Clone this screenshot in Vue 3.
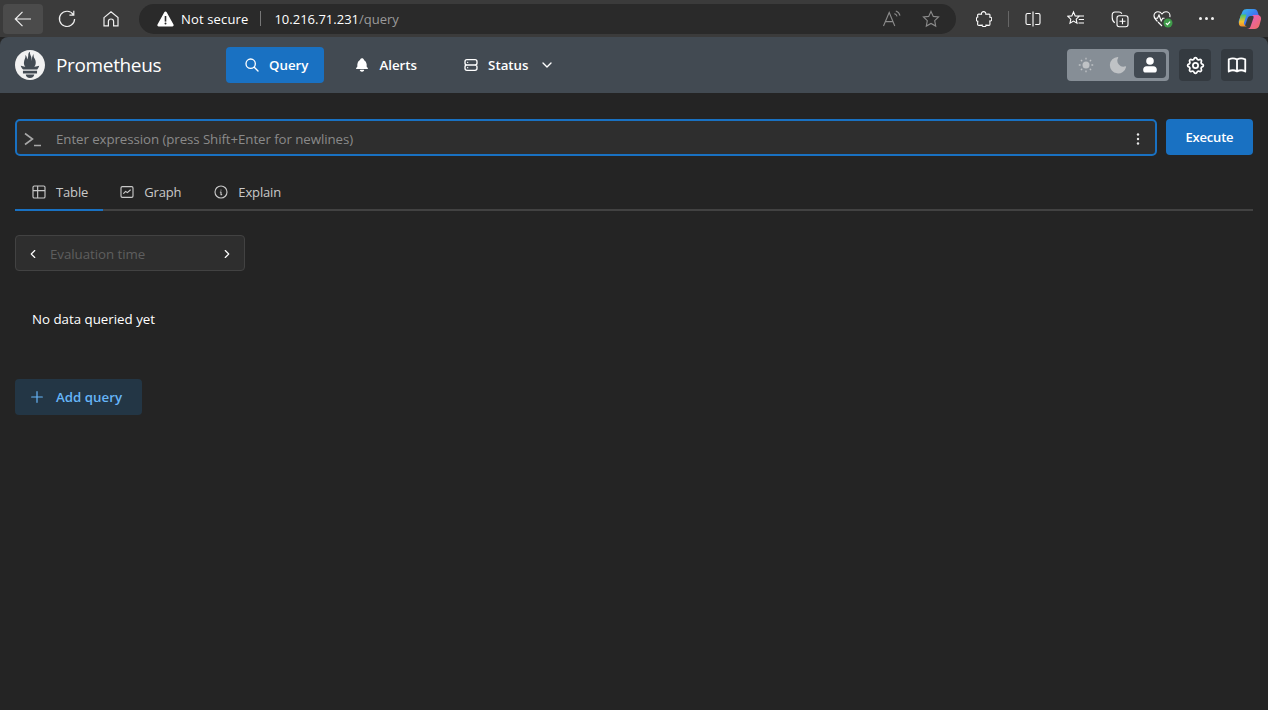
<template>
  <div class="page">
    <!-- browser chrome -->
    <div class="chrome">
      <div class="chrome-left">
        <span class="cbtn back">
          <svg width="20" height="20" viewBox="0 0 20 20" class="thin"><path d="M18 10H2.500M9.500 2.800 2.300 10l7.200 7.200" /></svg>
        </span>
        <span class="cbtn">
          <svg width="20" height="20" viewBox="0 0 20 20" class="thin"><path d="M16.300 5.600A7.600 7.600 0 1 0 17.600 10M16.800 1.800v4.400h-4.400" /></svg>
        </span>
        <span class="cbtn">
          <svg width="18" height="18" viewBox="0 0 18 18" class="thin"><path d="M2 7.600 9 1.800l7 5.800v8.200h-4.400v-4.200a2.600 2.600 0 0 0-5.200 0v4.200H2z" /></svg>
        </span>
      </div>
      <div class="omnibox">
        <svg class="warn" width="17" height="16" viewBox="0 0 17 16"><path d="M8.500.6c.5 0 .9.2 1.200.7l6.800 12.200c.5.9-.1 2-1.200 2H1.700c-1.100 0-1.700-1.100-1.200-2L7.300 1.300c.3-.5.700-.7 1.200-.7z" fill="#fff" /><rect x="7.700" y="5" width="1.600" height="5.600" fill="#2a2a2a" /><circle cx="8.500" cy="12.600" r="1" fill="#2a2a2a" /></svg>
        <span class="secure">Not secure</span>
        <span class="omni-sep"></span>
        <span class="url">10.216.71.231<span class="url-path">/query</span></span>
        <span class="omni-right">
          <svg width="20" height="18" viewBox="0 0 20 18" class="dim"><path d="M1.500 16 7.200 2.500 12.800 16M3.400 11.600h7.600M12.400 3.600c1.400.4 2.300 1.400 2.700 2.800M13.800 1c2.200.6 3.600 2.200 4.200 4.600" /></svg>
          <svg width="18" height="18" viewBox="0 0 18 18" class="dim"><path d="m9 1.400 2.300 5 5.300.6-3.900 3.700 1 5.400L9 13.400l-4.700 2.700 1-5.400L1.400 7l5.300-.6z" /></svg>
        </span>
      </div>
      <div class="chrome-right">
        <svg class="ext" width="16" height="16" viewBox="0 0 16 16"><path d="M5.500 3.200C5.200 1.800 6.200.6 7.600.6S10 1.800 9.800 3.200L13 3c.6 0 1 .4 1 1l-.2 2.200c1.400-.2 2 .8 2 1.900s-.8 2.200-2 1.900L14 13c0 1-.5 1.400-1 1.400l-3-.2c.2.8-.6 1.400-1.800 1.400S6 15 6.200 14.200l-3.200.2c-1 0-1.400-.4-1.400-1.400l.2-2.600c-1 0-1.400-1-1.400-2.200S1 6 1.800 6L1.600 4c0-.6.4-1 1.200-1z" fill="none" stroke="#fff" stroke-width="1.100" /></svg>
        <span class="chrome-sep"></span>
        <svg class="ext" width="16" height="16" viewBox="0 0 16 16"><path d="M5.800 2.500H2.500a1.500 1.500 0 0 0-1.500 1.500v8a1.500 1.500 0 0 0 1.500 1.500h3.300M10.200 2.500h3.300A1.500 1.500 0 0 1 15 4v8a1.500 1.500 0 0 1-1.500 1.500h-3.300M8 .5v15" fill="none" stroke="#fff" stroke-width="1.100" /></svg>
        <svg class="ext" width="18" height="18" viewBox="0 0 18 18"><path d="m6.500 2 1.700 3.900 4 .4-3 2.800.8 4.100-3.500-2.100L3 13.200l.8-4.100-3-2.800 4-.4zM11.500 6h5.500M11.800 9.500H17M11.500 13H17" fill="none" stroke="#fff" stroke-width="1.100" /></svg>
        <svg class="ext" width="18" height="18" viewBox="0 0 18 18"><path d="M3.800 12.800C2.300 12 1.200 9.900 1.200 7.500V5c0-1.800 1-3 2.800-3h4c1.400 0 2.400.7 2.800 1.800" fill="none" stroke="#fff" stroke-width="1.100" /><rect x="6" y="5.800" width="11" height="11" rx="2.200" fill="none" stroke="#fff" stroke-width="1.100" /><path d="M11.500 8.300v6M8.500 11.300h6" stroke="#fff" stroke-width="1.100" /></svg>
        <span class="health">
          <svg width="20" height="18" viewBox="0 0 20 18"><path d="M4.500 11.500C2.300 9.500 1 8 1 5.800 1 3.500 2.800 1.800 5 1.800c1.700 0 3 .8 4 2.200 1-1.400 2.300-2.200 4-2.200 2.200 0 4 1.700 4 4 0 .5-.1.900-.2 1.400M1.200 8.200h3.300L6 5l2.200 6 1.500-2.800h1.800M5 12l4 4" fill="none" stroke="#fff" stroke-width="1.100" /><circle cx="15" cy="13" r="4.500" fill="#3f9c4a" /><path d="m12.900 13.100 1.500 1.500 2.700-2.900" fill="none" stroke="#fff" stroke-width="1.200" /></svg>
        </span>
        <span class="more"><i></i><i></i><i></i></span>
        <svg class="copilot" width="24" height="22" viewBox="0 0 24 22">
          <defs>
            <linearGradient id="cpa" x1="0" y1="0" x2="1" y2="1"><stop offset="0" stop-color="#38c6e8" /><stop offset="0.5" stop-color="#3c7cf0" /><stop offset="1" stop-color="#7a55e0" /></linearGradient>
            <linearGradient id="cpb" x1="0" y1="0" x2="0" y2="1"><stop offset="0" stop-color="#3fc46e" /><stop offset="0.6" stop-color="#f2c230" /><stop offset="1" stop-color="#f08a2c" /></linearGradient>
            <linearGradient id="cpc" x1="0" y1="0" x2="1" y2="1"><stop offset="0" stop-color="#e45bd0" /><stop offset="1" stop-color="#f0705a" /></linearGradient>
          </defs>
          <path d="M9 1h7c2 0 3 1 3.500 2.500L21 8h-8.500C11 8 10 9 9.500 10.500L7 17.500C5 18 3 18.500 1.500 16.500.500 15 .500 13.500 1 12L4.500 3.500C5.300 1.800 7 1 9 1z" fill="url(#cpa)" />
          <path d="M4 6.500h4.500L6 14.500c-.5 2 1 3.500 3 4H4c-2.500 0-3.500-2-3-4.500L2.500 8c.2-1 .7-1.500 1.500-1.500z" fill="url(#cpb)" />
          <path d="M14 7h5c2.800 0 4.500 2 4 4.500L21.500 17c-.6 2.800-2.800 4-5 4H9c2 0 3-1 3.500-2.500l3-8.500c.4-1.300-.2-2.500-1.500-3z" fill="url(#cpc)" />
        </svg>
      </div>
    </div>

    <!-- app header -->
    <header class="header">
      <div class="brand">
        <svg width="30" height="30" viewBox="0 0 24 24"><path fill="#f1f1f1" d="M12 0C5.373 0 0 5.372 0 12c0 6.627 5.373 12 12 12s12-5.373 12-12c0-6.628-5.373-12-12-12zm0 22.460c-1.885 0-3.414-1.260-3.414-2.814h6.828c0 1.553-1.528 2.813-3.414 2.813zm5.640-3.745H6.360v-2.046h11.280v2.046zm-.04-3.098H6.391c-.037-.043-.075-.086-.111-.13-1.155-1.401-1.427-2.133-1.690-2.879-.005-.025 1.400.287 2.395.511 0 0 .513.119 1.262.255-.719-.842-1.146-1.912-1.146-3.005 0-2.401 1.842-4.499 1.177-6.195.647.053 1.339 1.366 1.386 3.420.688-.951.976-2.687.976-3.751 0-1.103.726-2.383 1.453-2.427-.648 1.067.168 1.982.894 4.256.272.854.237 2.290.447 3.201.07-1.892.395-4.652 1.595-5.605-.529 1.200.078 2.702.494 3.424.671 1.164 1.078 2.047 1.078 3.716a4.642 4.642 0 01-1.110 2.996c.792-.149 1.338-.283 1.338-.283l2.573-.502s-.374 1.538-1.813 3.098z" /></svg>
        <span class="brand-name">Prometheus</span>
      </div>
      <nav class="nav">
        <a class="nav-item active">
          <svg class="ti" width="16" height="16" viewBox="0 0 24 24"><path d="M3 10a7 7 0 1 0 14 0a7 7 0 1 0-14 0M21 21l-6-6" /></svg>
          Query
        </a>
        <a class="nav-item">
          <svg width="16" height="16" viewBox="0 0 24 24" fill="#fff"><path d="M14.235 19c.865 0 1.322 1.024.745 1.668a3.992 3.992 0 0 1-2.980 1.332a3.992 3.992 0 0 1-2.980-1.332c-.552-.616-.158-1.579.634-1.661l.11-.006h4.471z" /><path d="M12 2c1.358 0 2.506.903 2.875 2.141l.046.171l.008.043a8.013 8.013 0 0 1 4.024 6.069l.028.287l.019.289v2.931l.021.136a3 3 0 0 0 1.143 1.847l.167.117l.162.099c.86.487.56 1.766-.377 1.864l-.116.006h-16c-1.028 0-1.387-1.364-.493-1.870a3 3 0 0 0 1.472-2.063l.021-.143l.001-2.970a8 8 0 0 1 3.821-6.454l.248-.146l.01-.043a3.003 3.003 0 0 1 2.562-2.290l.182-.017l.176-.004z" /></svg>
          Alerts
        </a>
        <a class="nav-item">
          <svg class="ti" width="16" height="16" viewBox="0 0 24 24"><path d="M3 7a3 3 0 0 1 3-3h12a3 3 0 0 1 3 3v2a3 3 0 0 1-3 3h-12a3 3 0 0 1-3-3zM3 15a3 3 0 0 1 3-3h12a3 3 0 0 1 3 3v2a3 3 0 0 1-3 3h-12a3 3 0 0 1-3-3zM7 8v.01M7 16v.01" /></svg>
          Status
          <svg class="ti caret" width="16" height="16" viewBox="0 0 24 24"><path d="m6 9 6 6 6-6" /></svg>
        </a>
      </nav>
      <div class="header-right">
        <div class="theme">
          <span class="theme-opt">
            <svg width="16" height="16" viewBox="0 0 16 16" fill="#bfc2c5"><circle cx="8" cy="8" r="3.500" /><path d="M8 .8v1.800M8 13.400v1.800M.8 8h1.800M13.400 8h1.800M2.900 2.900l1.300 1.300M11.800 11.800l1.300 1.300M2.900 13.100l1.300-1.300M11.800 4.200l1.300-1.300" stroke="#bfc2c5" stroke-width="1.300" /></svg>
          </span>
          <span class="theme-opt">
            <svg width="18" height="18" viewBox="0 0 18 18" fill="#bfc2c5"><path d="M8.800 1c.4 0 .6.400.4.700a6 6 0 0 0 7.300 8.600c.4-.1.700.200.6.600A8.200 8.200 0 1 1 8.800 1z" /></svg>
          </span>
          <span class="theme-opt on">
            <svg width="18" height="18" viewBox="0 0 18 18" fill="#fff"><circle cx="9" cy="5" r="3.800" /><path d="M5.500 10.300h7c2 0 3.300 1.400 3.300 3.300v.600c0 1.500-1 2.300-2.300 2.300h-9C3.200 16.500 2.200 15.700 2.200 14.200v-.600c0-1.900 1.300-3.300 3.300-3.300z" /></svg>
          </span>
        </div>
        <span class="square">
          <svg class="ti" width="21" height="21" viewBox="0 0 24 24"><path d="M10.325 4.317c.426-1.756 2.924-1.756 3.350 0a1.724 1.724 0 0 0 2.573 1.066c1.543-.94 3.310.826 2.370 2.370a1.724 1.724 0 0 0 1.065 2.572c1.756.426 1.756 2.924 0 3.350a1.724 1.724 0 0 0-1.066 2.573c.94 1.543-.826 3.310-2.370 2.370a1.724 1.724 0 0 0-2.572 1.065c-.426 1.756-2.924 1.756-3.350 0a1.724 1.724 0 0 0-2.573-1.066c-1.543.94-3.310-.826-2.370-2.370a1.724 1.724 0 0 0-1.065-2.572c-1.756-.426-1.756-2.924 0-3.350a1.724 1.724 0 0 0 1.066-2.573c-.94-1.543.826-3.310 2.370-2.370c1 .608 2.296.07 2.572-1.065zM9 12a3 3 0 1 0 6 0a3 3 0 0 0-6 0" /></svg>
        </span>
        <span class="square">
          <svg class="ti" width="22" height="22" viewBox="0 0 24 24"><path d="M3 19a9 9 0 0 1 9 0a9 9 0 0 1 9 0M3 6a9 9 0 0 1 9 0a9 9 0 0 1 9 0M3 6v13M12 6v13M21 6v13" /></svg>
        </span>
      </div>
    </header>

    <main class="main">
      <div class="query-row">
        <div class="expr">
          <svg class="term" width="20" height="20" viewBox="0 0 20 20"><path d="m2 4.500 7.500 5.500L2 15.500M11 16.500h7" /></svg>
          <span class="placeholder">Enter expression (press Shift+Enter for newlines)</span>
          <svg class="dots" width="16" height="16" viewBox="0 0 16 16" fill="#e8e8e8"><circle cx="8" cy="3.500" r="1.200" /><circle cx="8" cy="8" r="1.200" /><circle cx="8" cy="12.500" r="1.200" /></svg>
        </div>
        <button class="execute">Execute</button>
      </div>

      <div class="tabs">
        <a class="tab active">
          <svg class="ti small" width="16" height="16" viewBox="0 0 24 24"><path d="M3 5a2 2 0 0 1 2-2h14a2 2 0 0 1 2 2v14a2 2 0 0 1-2 2h-14a2 2 0 0 1-2-2zM3 10h18M10 3v18" /></svg>
          Table
        </a>
        <a class="tab">
          <svg class="ti small" width="16" height="16" viewBox="0 0 24 24"><path d="M3 6a2 2 0 0 1 2-2h14a2 2 0 0 1 2 2v12a2 2 0 0 1-2 2h-14a2 2 0 0 1-2-2zM7 14l3-3 2.500 2 4.500-4" /></svg>
          Graph
        </a>
        <a class="tab last">
          <svg class="ti small" width="16" height="16" viewBox="0 0 24 24"><path d="M3 12a9 9 0 1 0 18 0a9 9 0 0 0-18 0M12 9h.01M11 12h1v4h1" /></svg>
          Explain
        </a>
      </div>

      <div class="eval">
        <svg class="ti" width="14" height="14" viewBox="0 0 24 24"><path d="m15 6-6 6 6 6" /></svg>
        <span class="eval-label">Evaluation time</span>
        <svg class="ti" width="14" height="14" viewBox="0 0 24 24"><path d="m9 6 6 6-6 6" /></svg>
      </div>

      <p class="empty">No data queried yet</p>

      <button class="add">
        <svg class="plus" width="16" height="16" viewBox="0 0 24 24"><path d="M12 4v16M4 12h16" /></svg>
        Add query
      </button>
    </main>
  </div>
</template>

<script setup>
</script>

<style>
html, body {
  margin: 0;
  background: #242424;
}
</style>

<style scoped>
.page {
  height: 710px;
  overflow: hidden;
  background: #242424;
  color: #fff;
  font-family: "Open Sans", "Noto Sans", sans-serif;
  font-size: 13px;
}

.chrome {
  height: 37px;
  background: #3b3b3b;
  display: flex;
  align-items: center;
}

.chrome-left {
  display: flex;
  align-items: center;
  padding-left: 3px;
  width: 139px;
  flex: none;
  box-sizing: border-box;
  gap: 4px;
}

.cbtn {
  width: 40px;
  height: 30px;
  border-radius: 4px;
  display: flex;
  align-items: center;
  justify-content: center;
}

.cbtn.back {
  background: #4b4b4b;
}

.thin {
  fill: none;
  stroke: #efefef;
  stroke-width: 1.2;
}

.omnibox {
  width: 817px;
  height: 30px;
  flex: none;
  border-radius: 15px;
  background: #2a2a2a;
  display: flex;
  align-items: center;
  padding: 0 16px 0 18px;
  box-sizing: border-box;
}

.secure {
  margin-left: 7px;
  font-size: 13px;
  letter-spacing: 0.15px;
}

.omni-sep {
  width: 1px;
  height: 15px;
  background: #777;
  margin: 0 13px 0 12px;
}

.url {
  font-size: 13px;
}

.url-path {
  color: #9a9a9a;
}

.omni-right {
  margin-left: auto;
  display: flex;
  align-items: center;
  gap: 20px;
}

.dim {
  fill: none;
  stroke: #8b8b8b;
  stroke-width: 1.1;
}

.chrome-right {
  flex: 1;
  display: flex;
  align-items: center;
  padding-left: 20px;
  position: relative;
}

.chrome-sep {
  width: 1px;
  height: 16px;
  background: #666;
  margin: 0 16px 0 16px;
}

.chrome-right .ext + .ext {
  margin-left: 26px;
}

.chrome-sep + .ext {
  margin-left: 0 !important;
}

.health {
  display: flex;
  margin-left: 24px;
}

.more {
  display: flex;
  gap: 3px;
  margin-left: 26px;
}

.more i {
  width: 3px;
  height: 3px;
  border-radius: 50%;
  background: #f2f2f2;
}

.copilot {
  margin-left: 24px;
}

.header {
  height: 56px;
  background: #424a52;
  border-radius: 8px 8px 0 0;
  display: flex;
  align-items: center;
  padding: 0 15px;
}

.brand {
  display: flex;
  align-items: center;
  gap: 11px;
  width: 211px;
  flex: none;
}

.brand svg {
  flex: none;
}

.brand-name {
  font-size: 19px;
  letter-spacing: -0.35px;
}

.nav {
  display: flex;
  align-items: center;
  gap: 11px;
}

.nav-item {
  height: 36px;
  padding: 0 16px 0 19px;
  border-radius: 4px;
  display: flex;
  align-items: center;
  gap: 9px;
  font-size: 13.3px;
  font-weight: 600;
  color: #fff;
}

.nav-item.active {
  background: #1971c2;
  padding-left: 18px;
}

.caret {
  margin-left: 1px;
}

.ti {
  fill: none;
  stroke: #fff;
  stroke-width: 2;
  stroke-linecap: round;
  stroke-linejoin: round;
  flex: none;
}

.ti.small {
  stroke: #c9c9c9;
  stroke-width: 1.7;
}

.header-right {
  margin-left: auto;
  display: flex;
  align-items: center;
  gap: 10px;
}

.theme {
  width: 102px;
  height: 32px;
  background: #868e96;
  border-radius: 4px;
  display: flex;
  align-items: center;
  padding: 3px;
  box-sizing: border-box;
}

.theme-opt {
  width: 32px;
  height: 26px;
  display: flex;
  align-items: center;
  justify-content: center;
}

.theme-opt.on {
  background: #424a52;
  border-radius: 4px;
}

.square {
  width: 32px;
  height: 32px;
  background: #343a40;
  border-radius: 4px;
  display: flex;
  align-items: center;
  justify-content: center;
}

.main {
  padding: 26px 15px 0;
}

.query-row {
  display: flex;
  align-items: flex-start;
  gap: 9px;
}

.expr {
  flex: 1;
  height: 37px;
  box-sizing: border-box;
  border: 2px solid #1971c2;
  border-radius: 5px;
  background: #2e2e2e;
  display: flex;
  align-items: center;
  padding: 2px 9px 0 6px;
}

.term {
  fill: none;
  stroke: #a8a8a8;
  stroke-width: 1.6;
  flex: none;
}

.placeholder {
  margin-left: 13px;
  color: #8a8a8a;
  font-size: 13.3px;
  letter-spacing: -0.08px;
}

.dots {
  margin-left: auto;
}

.execute {
  width: 87px;
  height: 36px;
  border: none;
  border-radius: 4px;
  background: #1971c2;
  color: #fff;
  font-family: inherit;
  font-size: 13px;
  font-weight: 600;
  letter-spacing: -0.2px;
  padding: 0;
}

.tabs {
  margin-top: 18px;
  height: 37px;
  box-sizing: border-box;
  border-bottom: 2px solid #424242;
  display: flex;
}

.tab {
  height: 37px;
  box-sizing: border-box;
  padding: 0 15px 1px 16px;
  display: flex;
  align-items: center;
  gap: 9px;
  color: #c9c9c9;
  font-size: 13px;
  letter-spacing: -0.15px;
}

.tab.active {
  border-bottom: 2px solid #1971c2;
  padding-bottom: 0;
}

.tab.last {
  margin-left: 1px;
}

.eval {
  margin-top: 24px;
  width: 230px;
  height: 36px;
  box-sizing: border-box;
  border: 1px solid #424242;
  border-radius: 4px;
  background: #2e2e2e;
  display: flex;
  align-items: center;
  padding: 1px 10px 0;
}

.eval-label {
  margin-left: 10px;
  color: #5e5e5e;
  font-size: 13.3px;
  letter-spacing: -0.05px;
  flex: 1;
}

.empty {
  margin: 39px 0 0 17px;
  height: 18px;
  line-height: 18px;
  font-size: 13.3px;
}

.add {
  margin-top: 51px;
  width: 127px;
  height: 36px;
  border: none;
  border-radius: 4px;
  background: #233645;
  color: #66b5f8;
  display: flex;
  align-items: center;
  padding: 0 0 0 14px;
  gap: 11px;
  font-family: inherit;
  font-size: 13.3px;
  font-weight: 600;
}

.plus {
  fill: none;
  stroke: #66b5f8;
  stroke-width: 1.8;
  stroke-linecap: round;
}
</style>
